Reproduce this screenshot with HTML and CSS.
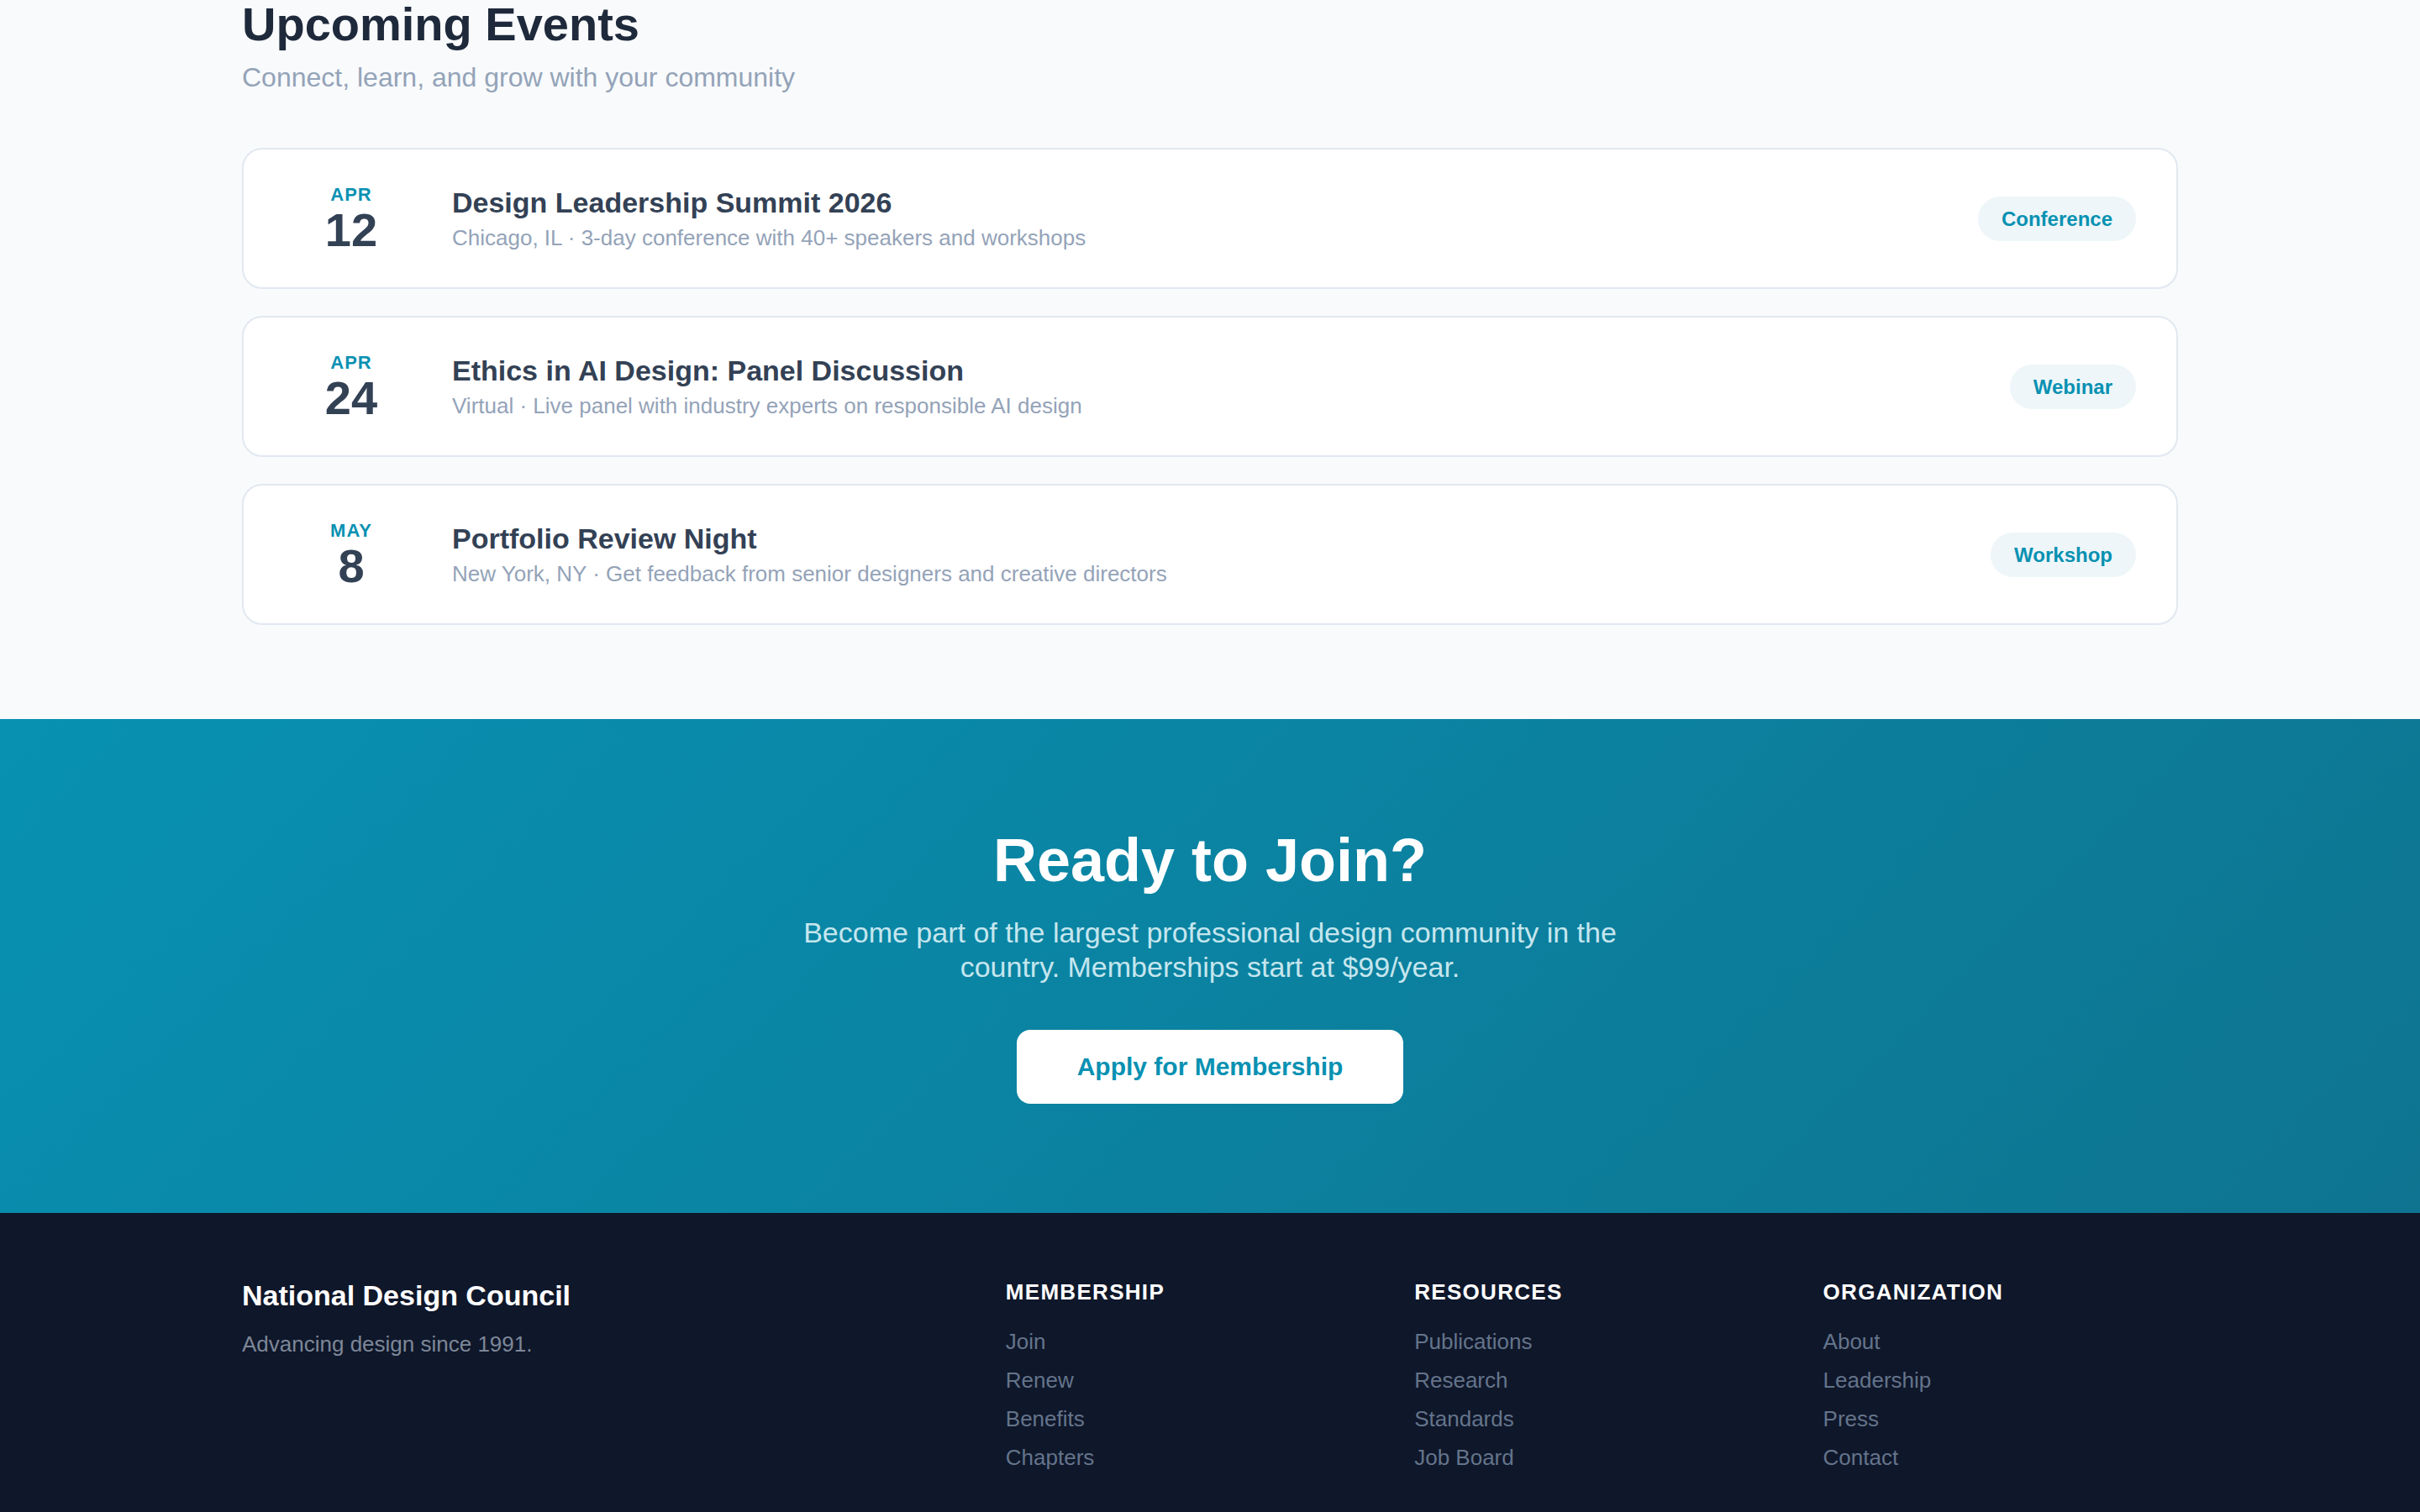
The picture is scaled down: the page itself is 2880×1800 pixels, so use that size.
FILE: index.html
```html
<!DOCTYPE html>
<html lang="en">
<head>
<meta charset="utf-8">
<title>National Design Council — Events</title>
<link rel="stylesheet" href="styles.css">
</head>
<body>
<section class="events">
  <div class="container">
    <h2 class="events-title">Upcoming Events</h2>
    <p class="events-sub">Connect, learn, and grow with your community</p>
    <ul class="event-list">
      <li class="event-card">
        <div class="event-date"><span class="event-month">APR</span><span class="event-day">12</span></div>
        <div class="event-info">
          <h3 class="event-name">Design Leadership Summit 2026</h3>
          <p class="event-desc">Chicago, IL · 3-day conference with 40+ speakers and workshops</p>
        </div>
        <span class="event-tag">Conference</span>
      </li>
      <li class="event-card">
        <div class="event-date"><span class="event-month">APR</span><span class="event-day">24</span></div>
        <div class="event-info">
          <h3 class="event-name">Ethics in AI Design: Panel Discussion</h3>
          <p class="event-desc">Virtual · Live panel with industry experts on responsible AI design</p>
        </div>
        <span class="event-tag">Webinar</span>
      </li>
      <li class="event-card">
        <div class="event-date"><span class="event-month">MAY</span><span class="event-day">8</span></div>
        <div class="event-info">
          <h3 class="event-name">Portfolio Review Night</h3>
          <p class="event-desc">New York, NY · Get feedback from senior designers and creative directors</p>
        </div>
        <span class="event-tag">Workshop</span>
      </li>
    </ul>
  </div>
</section>

<section class="cta">
  <h2 class="cta-title">Ready to Join?</h2>
  <p class="cta-text">Become part of the largest professional design community in the country. Memberships start at $99/year.</p>
  <a class="cta-button" href="#">Apply for Membership</a>
</section>

<footer class="footer">
  <div class="container footer-grid">
    <div class="footer-brand">
      <div class="brand-name">National Design Council</div>
      <p class="brand-tagline">Advancing design since 1991.</p>
    </div>
    <div class="footer-col">
      <h4 class="footer-heading">Membership</h4>
      <ul class="footer-links">
        <li><a href="#">Join</a></li>
        <li><a href="#">Renew</a></li>
        <li><a href="#">Benefits</a></li>
        <li><a href="#">Chapters</a></li>
      </ul>
    </div>
    <div class="footer-col">
      <h4 class="footer-heading">Resources</h4>
      <ul class="footer-links">
        <li><a href="#">Publications</a></li>
        <li><a href="#">Research</a></li>
        <li><a href="#">Standards</a></li>
        <li><a href="#">Job Board</a></li>
      </ul>
    </div>
    <div class="footer-col">
      <h4 class="footer-heading">Organization</h4>
      <ul class="footer-links">
        <li><a href="#">About</a></li>
        <li><a href="#">Leadership</a></li>
        <li><a href="#">Press</a></li>
        <li><a href="#">Contact</a></li>
      </ul>
    </div>
  </div>
</footer>
</body>
</html>
```

FILE: styles.css
```css
* {
  box-sizing: border-box;
  margin: 0;
  padding: 0;
}

body {
  font-family: "Liberation Sans", Arial, Helvetica, sans-serif;
  background: #f8fafc;
  color: #1e293b;
}

a {
  text-decoration: none;
  color: inherit;
}

ul {
  list-style: none;
}

.container {
  width: 2304px;
  margin: 0 auto;
}

/* Events */
.events {
  padding-bottom: 112px;
}

.events-title {
  font-size: 56px;
  line-height: 58px;
  font-weight: 700;
  color: #1e293b;
}

.events-sub {
  margin-top: 10px;
  font-size: 32px;
  line-height: 48px;
  color: #94a3b8;
}

.event-list {
  margin-top: 60px;
  display: flex;
  flex-direction: column;
  gap: 32px;
}

.event-card {
  display: flex;
  align-items: center;
  gap: 40px;
  padding: 40px 48px;
  background: #ffffff;
  border: 2px solid #e2e8f0;
  border-radius: 24px;
}

.event-date {
  flex: none;
  width: 160px;
  display: flex;
  flex-direction: column;
  align-items: center;
}

.event-month {
  font-size: 22px;
  line-height: 28px;
  font-weight: 700;
  letter-spacing: 1px;
  color: #0891b2;
}

.event-day {
  font-size: 56px;
  line-height: 56px;
  font-weight: 700;
  color: #334155;
}

.event-info {
  flex: 1;
}

.event-name {
  font-size: 34px;
  line-height: 42px;
  font-weight: 700;
  color: #334155;
}

.event-desc {
  margin-top: 4px;
  font-size: 26px;
  line-height: 34px;
  color: #94a3b8;
}

.event-tag {
  flex: none;
  padding: 10px 28px;
  font-size: 24px;
  line-height: 33px;
  font-weight: 700;
  color: #0891b2;
  background: #eef6f9;
  border-radius: 999px;
}

/* CTA */
.cta {
  padding: 128px 0 130px;
  background: linear-gradient(135deg, #0891b2 0%, #0e7490 100%);
  text-align: center;
  display: flex;
  flex-direction: column;
  align-items: center;
}

.cta-title {
  font-size: 72px;
  line-height: 80px;
  font-weight: 700;
  color: #ffffff;
}

.cta-text {
  margin-top: 26px;
  max-width: 1024px;
  font-size: 34px;
  line-height: 41px;
  color: #c5e6ee;
}

.cta-button {
  margin-top: 54px;
  display: inline-flex;
  align-items: center;
  justify-content: center;
  height: 88px;
  padding: 0 72px;
  background: #ffffff;
  color: #0891b2;
  font-size: 30px;
  font-weight: 700;
  border-radius: 16px;
}

/* Footer */
.footer {
  background: #0f172a;
  padding: 78px 0 96px;
}

.footer-grid {
  display: grid;
  grid-template-columns: 2fr 1fr 1fr 1fr;
  gap: 64px;
}

.brand-name {
  font-size: 34px;
  line-height: 40px;
  font-weight: 700;
  color: #ffffff;
}

.brand-tagline {
  margin-top: 20px;
  font-size: 26px;
  line-height: 36px;
  color: #7d8798;
}

.footer-heading {
  font-size: 26px;
  line-height: 32px;
  font-weight: 700;
  letter-spacing: 1.3px;
  text-transform: uppercase;
  color: #ffffff;
}

.footer-links {
  margin-top: 28px;
  display: flex;
  flex-direction: column;
  gap: 16px;
}

.footer-links li {
  font-size: 26px;
  line-height: 30px;
  color: #64748b;
}
```
